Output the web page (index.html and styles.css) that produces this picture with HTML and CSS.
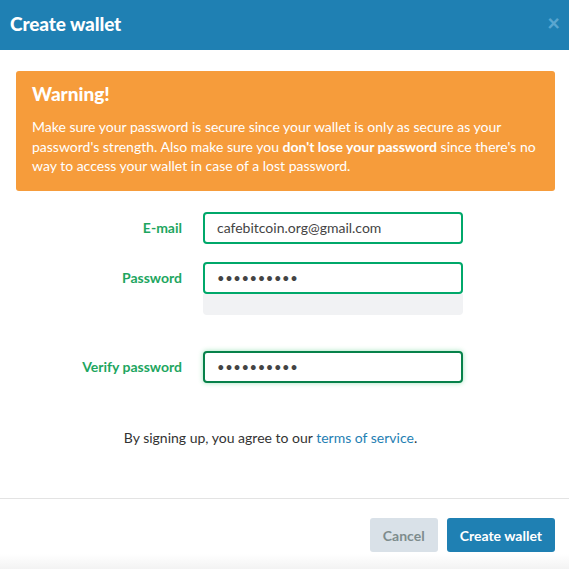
FILE: index.html
```html
<!DOCTYPE html>
<html lang="en">
<head>
  <meta charset="UTF-8">
  <title>Create wallet</title>
  <link rel="stylesheet" href="styles.css">
</head>
<body>
  <div class="modal">
    <div class="modal-header">
      <h3>Create wallet</h3>
      <span class="close">&times;</span>
    </div>
    <div class="modal-body">
      <div class="alert">
        <h4>Warning!</h4>
        <p>Make sure your password is secure since your wallet is only as secure as your password's strength. Also make sure you <b>don't lose your password</b> since there's no way to access your wallet in case of a lost password.</p>
      </div>
      <form class="form">
        <label for="email">E-mail</label>
        <input id="email" type="text" value="cafebitcoin.org@gmail.com">
        <label for="password">Password</label>
        <div class="field">
          <input id="password" type="password" value="0123456789">
          <div class="strength"></div>
        </div>
        <label for="verify" class="verify-label">Verify password</label>
        <input id="verify" class="focused verify-input" type="password" value="0123456789">
      </form>
      <p class="terms">By signing up, you agree to our <a href="#">terms of service</a>.</p>
    </div>
    <div class="modal-footer">
      <button class="btn btn-cancel">Cancel</button>
      <button class="btn btn-primary">Create wallet</button>
    </div>
  </div>
</body>
</html>
```

FILE: styles.css
```css
body {
  margin: 0;
  background: #fff;
  font-family: Lato, 'Open Sans', sans-serif;
  color: #333;
}
.modal {
  height: 569px;
  display: flex;
  flex-direction: column;
}
.modal-header {
  height: 50px;
  background: #1f80b3;
  display: flex;
  align-items: center;
  justify-content: space-between;
  padding: 0 9px 4px 10px;
  box-sizing: border-box;
}
.modal-header h3 {
  margin: 0;
  color: #fff;
  font-size: 19px;
  font-weight: 900;
  letter-spacing: -0.1px;
}
.close {
  color: #5aa6d0;
  font-size: 22px;
  font-weight: 900;
  line-height: 1;
}
.modal-body {
  padding: 21px 14px 0 16px;
}
.alert {
  background: #f69c3b;
  color: #fff;
  border-radius: 3px;
  padding: 12px 14px 15px 16px;
}
.alert h4 {
  margin: 0 0 12px 0;
  font-size: 19px;
  font-weight: 900;
  line-height: 22px;
}
.alert p {
  margin: 0;
  font-size: 14px;
  line-height: 19.5px;
}
.form {
  display: grid;
  grid-template-columns: 166px 260px;
  column-gap: 21px;
  row-gap: 18px;
  align-items: start;
  margin-top: 21px;
}
.form label {
  color: #1ea65f;
  font-weight: 700;
  font-size: 14px;
  text-align: right;
  line-height: 32px;
}
.form input {
  box-sizing: border-box;
  width: 260px;
  height: 32px;
  border: 2px solid #00a86a;
  border-radius: 4px;
  padding: 0 12px;
  font-family: Lato, sans-serif;
  font-size: 14px;
  color: #444;
  outline: none;
}
.form input[type=password] {
  letter-spacing: 0.6px;
  font-size: 13px;
}
.strength {
  height: 21px;
  background: #f1f2f4;
  border-radius: 0 0 4px 4px;
}
.verify-label, .verify-input {
  margin-top: 18px;
}
.form input.focused {
  border-color: #07814a;
  box-shadow: 0 0 5px rgba(40, 190, 100, 0.45);
}
.terms {
  margin: 46px 0 0 0;
  font-size: 14px;
  text-align: center;
  padding-right: 30px;
}
.terms a {
  color: #1f80b3;
  text-decoration: none;
}
.modal-footer {
  margin-top: auto;
  border-top: 1px solid #e3e3e3;
  padding: 19px 14px 17px 0;
  display: flex;
  justify-content: flex-end;
  gap: 9px;
  background: linear-gradient(to bottom, #fff 0, #fff 55px, #f3f3f3 70px);
}
.btn {
  height: 34px;
  border: none;
  border-radius: 3px;
  font-family: Lato, sans-serif;
  font-size: 14px;
  font-weight: 700;
  padding: 0 13px;
}
.btn-cancel {
  background: #d9e1e8;
  color: #7e8c8d;
}
.btn-primary {
  background: #1f80b3;
  color: #fff;
}
```
